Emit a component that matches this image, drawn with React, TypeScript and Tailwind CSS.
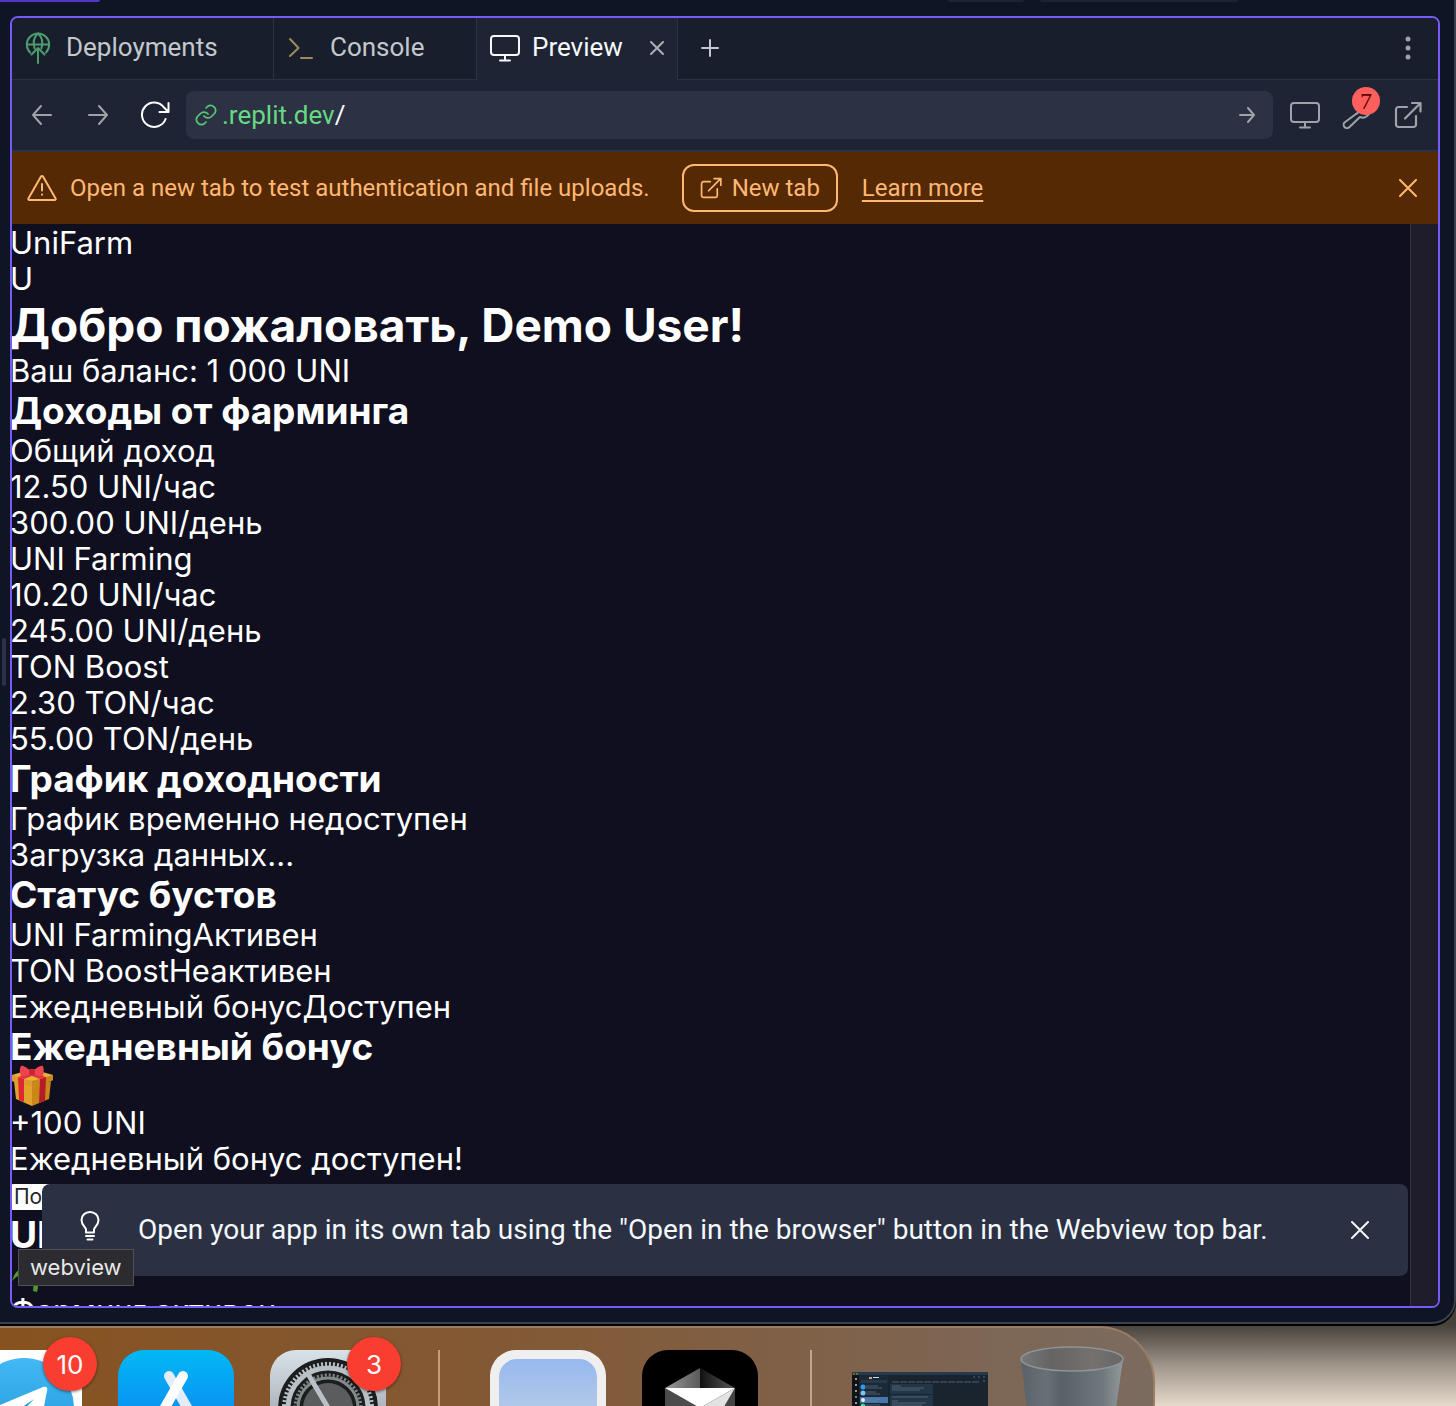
import type { ReactNode } from "react";

function Icon({ w, h, className = "", children }: { w: number; h: number; className?: string; children: ReactNode }) {
  return (
    <svg
      width={w}
      height={h}
      viewBox={`0 0 ${w} ${h}`}
      fill="none"
      stroke="currentColor"
      strokeWidth={2}
      strokeLinecap="round"
      strokeLinejoin="round"
      aria-hidden="true"
      className={`shrink-0 ${className}`}
    >
      {children}
    </svg>
  );
}

const DeployIcon = () => (
  <Icon w={26} h={32} className="text-[#4c9d6c]">
    <path d="M5 20.5a11.2 11.2 0 1 1 16 0" />
    <path d="M2 12.5h22M9.6 16.5C7.5 10 9 5 13 1.5 17 5 18.500 10 16.400 16.500" />
    <path d="M13 31V16M6.500 22.500 13 16l6.500 6.500" />
  </Icon>
);

const ConsoleIcon = () => (
  <Icon w={26} h={24} className="text-[#9c8a5c]">
    <path d="M2 3l8.500 9L2 20M13 22h11" />
  </Icon>
);

const MonitorIcon = () => (
  <Icon w={30} h={28}>
    <rect x="1" y="2" width="28" height="19" rx="3" />
    <path d="M15 21v5M10 26.500h10" />
  </Icon>
);

const CloseIcon = ({ size }: { size: number }) => (
  <Icon w={size} h={size}>
    <path d={`M1 1L${size - 1} ${size - 1}M${size - 1} 1L1 ${size - 1}`} />
  </Icon>
);

const ArrowIcon = ({ size, left = false }: { size: number; left?: boolean }) => (
  <Icon w={size} h={size} className={left ? "rotate-180" : ""}>
    <path d={`M1 ${size / 2}H${size - 1}M${size / 2 + 1} 1L${size - 1} ${size / 2}L${size / 2 + 1} ${size - 1}`} />
  </Icon>
);

const ReloadIcon = () => (
  <Icon w={30} h={28}>
    <path d="M25.600 18A12.200 12.200 0 1 1 24 6.500L28.500 11M28.500 2v9h-9" />
  </Icon>
);

const LinkIcon = () => (
  <Icon w={24} h={24} className="text-[#57c974]">
    <path d="M10 13a5 5 0 0 0 7.500.5l3-3a5 5 0 0 0-7-7L12 5" strokeWidth={1.700} />
    <path d="M14 11a5 5 0 0 0-7.500-.5l-3 3a5 5 0 0 0 7 7L12 19" strokeWidth={1.700} />
  </Icon>
);

const WarningIcon = () => (
  <Icon w={30} h={28}>
    <path d="M14 2.600 1.400 24.500a1 1 0 0 0 1 1.500h25.200a1 1 0 0 0 1-1.500L16 2.600a1.100 1.100 0 0 0-2 0Z" />
    <path d="M15 10v6.500M15 20.500v.2" />
  </Icon>
);

const ExternalIcon = ({ size }: { size: number }) => (
  <svg
    width={size}
    height={size}
    viewBox="0 0 28 28"
    fill="none"
    stroke="currentColor"
    strokeWidth={2.200}
    strokeLinecap="round"
    strokeLinejoin="round"
    aria-hidden="true"
    className="shrink-0"
  >
    <path d="M13 6H4.500A2.500 2.500 0 0 0 2 8.500v15A2.500 2.500 0 0 0 4.500 26h15a2.500 2.500 0 0 0 2.500-2.500V15M18 2h8.500v8.500M26 2.500 11 17.500" />
  </svg>
);

const WrenchIcon = () => (
  <Icon w={28} h={28}>
    <path d="M17 8.500a7 7 0 0 1 8-6l-4 4.500v3h3l3-3.500a7 7 0 0 1-9 9.500L7.500 26A3.200 3.200 0 0 1 2.500 21.500L14 13q3-1.500 3-4.500Z" />
  </Icon>
);

const BulbIcon = () => (
  <Icon w={20} h={30} className="text-white">
    <path d="M6 21.500v-3C5.500 16 1.500 14 1.500 9a8.500 8 0 0 1 17 0c0 5-4 7-4.500 9.500v3Z" />
    <path d="M6 25h8M7.500 28.500h5" />
  </Icon>
);

const GiftIcon = () => (
  <svg width="42" height="42" viewBox="0 0 42 42" role="img" aria-label="Подарок">
    <path d="M2 16 20 21V41L4 34Z" fill="#e3a32b" />
    <path d="M20 21 39 16 37 34 20 41Z" fill="#c98718" />
    <path d="M0 10 20 4 41 10 41 15 20 22 0 16Z" fill="#eab040" />
    <path d="M0 10 20 16 20 22 0 16Z" fill="#dc9d29" />
    <path d="M20 16 41 10V15L20 22Z" fill="#c8861c" />
    <path d="M6 12 12 14V37L7 35Z" fill="#dd2834" />
    <path d="M28 14 34 12 33 36 27 38Z" fill="#b51c27" />
    <path d="M6 12 24 6 30 7 12 14ZM28 14 12 8 17 6 34 12Z" fill="#e6323f" />
    <path d="M20 7C14 2 11 0 9 1c-2 3-1 8 0 10 3 1 7-1 11-3 4 2 9 4 11 3 1-3 1-7 0-10-2-1-6 1-11 6Z" fill="#ee4450" />
    <circle cx="20" cy="7" r="3" fill="#c9242f" />
  </svg>
);

const LeafIcon = () => (
  <svg width="42" height="36" viewBox="0 0 42 36" role="img" aria-label="Росток">
    <path d="M0 24C3 13 10 8 20 14c4-8 14-8 20-4-6 6-12 8-18 7 4 6 5 12 3 18l-4-1c1-7 0-12-2-17C10 15 5 19 0 24Z" fill="#4f9a26" />
  </svg>
);

function Line({ children }: { children: ReactNode }) {
  return <p className="text-[31px] leading-9">{children}</p>;
}

function Heading({ children }: { children: ReactNode }) {
  return <h2 className="text-[37px] leading-[44px] font-bold">{children}</h2>;
}

function TabBar() {
  return (
    <div role="tablist" className="flex h-[62px] shrink-0 bg-[#181e2c] text-[26px] text-[#c2c8cc]">
      <button role="tab" className="flex w-[262px] items-center gap-3 border-r border-b border-[#2b3245] px-[13px] pb-[2px]">
        <DeployIcon />
        <span className="pl-[3px]">Deployments</span>
      </button>
      <button role="tab" className="flex w-[203px] items-center gap-4 border-r border-b border-[#2b3245] px-[14px] pb-[2px]">
        <ConsoleIcon />
        Console
      </button>
      <div className="flex w-[201px] items-center border-r border-[#2b3245] bg-[#1e2433] px-[13px] pb-[3px]">
        <button role="tab" aria-selected="true" className="flex flex-1 items-center gap-3 text-[#f5f9fc]">
          <MonitorIcon />
          Preview
        </button>
        <button aria-label="Close tab" className="text-[#a9afb5]">
          <CloseIcon size={14} />
        </button>
      </div>
      <div className="flex flex-1 items-center justify-between border-b border-[#2b3245] pr-6 pb-px pl-[23px]">
        <button aria-label="New tab">
          <Icon w={18} h={18}>
            <path d="M9 1v16M1 9h16" />
          </Icon>
        </button>
        <button aria-label="More options" className="text-[#9da3a6]">
          <svg width="12" height="26" viewBox="0 0 12 26" fill="currentColor" aria-hidden="true">
            <circle cx="6" cy="4" r="2.500" />
            <circle cx="6" cy="13" r="2.500" />
            <circle cx="6" cy="22" r="2.500" />
          </svg>
        </button>
      </div>
    </div>
  );
}

function AddressBar() {
  return (
    <div className="flex h-[72px] shrink-0 items-center border-b-2 border-[#2d3344] bg-[#1e2433] pr-4 pl-5 text-[#9da3a6]">
      <button aria-label="Back">
        <ArrowIcon size={20} left />
      </button>
      <button aria-label="Forward" className="ml-9">
        <ArrowIcon size={20} />
      </button>
      <button aria-label="Reload" className="ml-8 text-white">
        <ReloadIcon />
      </button>
      <div className="ml-4 flex h-12 flex-1 items-center rounded-lg bg-[#2c3143] pr-[18px] pl-2 text-[26px]">
        <LinkIcon />
        <label htmlFor="path" className="pl-1 text-[#66d982]">
          .replit.dev
        </label>
        <input id="path" defaultValue="/" className="min-w-0 flex-1 bg-transparent text-white outline-none" />
        <button aria-label="Go">
          <ArrowIcon size={16} />
        </button>
      </div>
      <button aria-label="Device size" className="ml-[17px]">
        <MonitorIcon />
      </button>
      <button aria-label="Developer tools, 7 messages" className="relative ml-[22px]">
        <WrenchIcon />
        <span className="absolute -top-[14px] left-[10px] flex size-7 items-center justify-center rounded-full bg-[#ff605d] font-['Liberation_Serif',serif] text-2xl leading-none text-[#5c0000]">
          7
        </span>
      </button>
      <button aria-label="Open in the browser" className="ml-6">
        <ExternalIcon size={28} />
      </button>
    </div>
  );
}

function Banner() {
  return (
    <div className="flex h-[72px] shrink-0 items-center bg-[#542903] pr-[21px] pl-[15px] text-2xl text-[#ffb873]">
      <WarningIcon />
      <p className="pl-[13px]">Open a new tab to test authentication and file uploads.</p>
      <button className="ml-8 flex h-12 items-center gap-[10px] rounded-xl border-2 border-[#ffb873] px-4">
        <ExternalIcon size={22} />
        New tab
      </button>
      <a href="#learn" className="ml-6 underline decoration-2 underline-offset-4">
        Learn more
      </a>
      <button aria-label="Dismiss" className="ml-auto">
        <CloseIcon size={18} />
      </button>
    </div>
  );
}

function Webview() {
  return (
    <div className="flex min-h-0 flex-1 overflow-hidden bg-[#0f0f20] font-['Inter',sans-serif] text-white">
      <main className="-ml-0.5 min-w-0 flex-1 pt-px">
        <Line>UniFarm</Line>
        <Line>U</Line>
        <h1 className="text-[46px] leading-[56px] font-bold">Добро пожаловать, Demo User!</h1>
        <Line>Ваш баланс: 1 000 UNI</Line>
        <Heading>Доходы от фарминга</Heading>
        <Line>Общий доход</Line>
        <Line>12.50 UNI/час</Line>
        <Line>300.00 UNI/день</Line>
        <Line>UNI Farming</Line>
        <Line>10.20 UNI/час</Line>
        <Line>245.00 UNI/день</Line>
        <Line>TON Boost</Line>
        <Line>2.30 TON/час</Line>
        <Line>55.00 TON/день</Line>
        <Heading>График доходности</Heading>
        <Line>График временно недоступен</Line>
        <Line>Загрузка данных...</Line>
        <Heading>Статус бустов</Heading>
        <Line>UNI FarmingАктивен</Line>
        <Line>TON BoostНеактивен</Line>
        <Line>Ежедневный бонусДоступен</Line>
        <Heading>Ежедневный бонус</Heading>
        <div className="-mt-1 h-10 pl-0.5">
          <GiftIcon />
        </div>
        <Line>+100 UNI</Line>
        <Line>Ежедневный бонус доступен!</Line>
        <button className="my-[7px] block h-[26px] rounded bg-white px-1 text-[21px] leading-[26px] text-[#262626]">
          Получить
        </button>
        <div className="-mt-1">
          <Heading>UNI Farming</Heading>
        </div>
        <div className="h-9 pl-0.5">
          <LeafIcon />
        </div>
        <Line>Фарминг активен</Line>
      </main>
      <div className="w-7 border-l border-[#34333f] bg-[#1f1d2b]" />
    </div>
  );
}

function PreviewPane() {
  return (
    <section className="relative mr-[14px] ml-[10px] flex min-h-0 flex-1 flex-col overflow-hidden rounded-lg border-2 border-[#775bf5]">
      <TabBar />
      <AddressBar />
      <Banner />
      <Webview />
      <div
        role="status"
        className="absolute right-[30px] bottom-[30px] left-[30px] flex h-[92px] items-center rounded-lg bg-[#2b3143] pr-[39px] pl-[38px] text-[28px] text-[#f5f9fc]"
      >
        <div className="pb-2">
          <BulbIcon />
        </div>
        <p className="pl-[38px]">
          Open your app in its own tab using the "Open in the browser" button in the Webview top bar.
        </p>
        <button aria-label="Close" className="ml-auto">
          <CloseIcon size={18} />
        </button>
      </div>
      <div
        role="tooltip"
        className="absolute bottom-5 left-[6px] flex h-[37px] items-center border border-[#505055] bg-[#2c2c30] px-[11px] font-['Inter',sans-serif] text-[22px] text-[#e8e8e8]"
      >
        webview
      </div>
    </section>
  );
}

function Badge({ children }: { children: ReactNode }) {
  return (
    <span className="absolute -top-[13px] -right-[15px] flex size-[54px] items-center justify-center rounded-full bg-[#f93e31] font-['Inter',sans-serif] text-[26px] text-white shadow-[0_1px_3px_rgba(0,0,0,0.5)]">
      {children}
    </span>
  );
}

const TelegramIcon = () => (
  <svg width="116" height="116" viewBox="0 0 116 116" aria-hidden="true">
    <defs>
      <linearGradient id="tg" x1="0" y1="0" x2="0" y2="1">
        <stop offset="0" stopColor="#42b8f5" />
        <stop offset="1" stopColor="#1c93d5" />
      </linearGradient>
    </defs>
    <rect width="116" height="116" rx="26" fill="#fff" />
    <circle cx="58" cy="58" r="50" fill="url(#tg)" />
    <path d="M22 60 77 37c3-1 5 0 4 4L73 82c-1 4-4 4-7 2L40 62Z" fill="#fff" />
    <path d="M46 64 68 49 52 66v12Z" fill="#2c9bd0" />
  </svg>
);

const AppStoreIcon = () => (
  <svg width="116" height="116" viewBox="0 0 116 116" aria-hidden="true">
    <defs>
      <linearGradient id="as" x1="0" y1="0" x2="0" y2="1">
        <stop offset="0" stopColor="#02b8f5" />
        <stop offset="1" stopColor="#1070f0" />
      </linearGradient>
    </defs>
    <rect width="116" height="116" rx="26" fill="url(#as)" />
    <g stroke="#fff" strokeWidth="10" strokeLinecap="round">
      <path d="M51 26 82 80" stroke="#e4edf7" />
      <path d="M65 26 34 80M20 68h76" />
    </g>
  </svg>
);

const SettingsIcon = () => (
  <svg width="116" height="116" viewBox="0 0 116 116" fill="none" aria-hidden="true">
    <defs>
      <linearGradient id="st" x1="0" y1="0" x2="0" y2="1">
        <stop offset="0" stopColor="#d8e3e9" />
        <stop offset="1" stopColor="#84898e" />
      </linearGradient>
    </defs>
    <rect width="116" height="116" rx="26" fill="url(#st)" />
    <circle cx="58" cy="58" r="50" fill="#1b1d1e" />
    <circle cx="58" cy="58" r="40" stroke="#b9c1c6" strokeWidth="5" />
    <circle cx="58" cy="58" r="44" stroke="#b9c1c6" strokeWidth="4" strokeDasharray="2 2" />
    <circle cx="58" cy="58" r="30" stroke="#84898c" strokeWidth="3" />
    <circle cx="58" cy="58" r="33" stroke="#84898c" strokeWidth="3" strokeDasharray="2 2" />
    <circle cx="58" cy="58" r="25" fill="#5b5c5d" />
    <path d="M38 24 60 61H98M60 61 39 92" stroke="#b9c1c6" strokeWidth="5" />
  </svg>
);

const WindowIcon = () => (
  <svg width="116" height="116" viewBox="0 0 116 116" aria-hidden="true">
    <defs>
      <linearGradient id="wn" x1="0" y1="0" x2="0" y2="1">
        <stop offset="0" stopColor="#96b9ef" />
        <stop offset="0.500" stopColor="#b2c8e8" />
        <stop offset="1" stopColor="#c6d2e0" />
      </linearGradient>
    </defs>
    <rect width="116" height="116" rx="26" fill="#efefef" />
    <rect x="9" y="9" width="98" height="98" rx="18" fill="url(#wn)" />
  </svg>
);

const CubeIcon = () => (
  <svg width="116" height="116" viewBox="0 0 116 116" aria-hidden="true">
    <defs>
      <linearGradient id="cl" x1="0" y1="0" x2="1" y2="0">
        <stop offset="0" stopColor="#999" />
        <stop offset="1" stopColor="#5a5a5a" />
      </linearGradient>
      <linearGradient id="cr" x1="0" y1="0" x2="1" y2="0">
        <stop offset="0" stopColor="#111" />
        <stop offset="1" stopColor="#5a5a5a" />
      </linearGradient>
    </defs>
    <rect width="116" height="116" rx="26" fill="#000" />
    <path d="M58 18 23 38H58Z" fill="url(#cl)" />
    <path d="M58 18 93 38H58Z" fill="url(#cr)" />
    <path d="M23 38V78L58 98V58Z" fill="#4c4c4c" />
    <path d="M93 38V78L58 98Z" fill="#444" />
    <path d="M93 38 58 98V58Z" fill="#e2e2e2" />
    <path d="M23 38H93L58 58Z" fill="#fff" />
  </svg>
);

const MiniWindow = () => (
  <svg width="136" height="90" viewBox="0 0 136 90" aria-hidden="true">
    <rect width="136" height="90" rx="1" fill="#19242f" />
    <rect width="136" height="3" fill="#26394b" />
    <rect y="3" width="7" height="87" fill="#101214" />
    <rect x="7" y="3" width="29" height="87" fill="#1b2937" />
    <circle cx="2" cy="2" r="1" fill="#d44" />
    <circle cx="5" cy="2" r="1" fill="#3a5" />
    <rect x="9" y="8" width="26" height="3" fill="#26394b" />
    <rect x="17" y="5" width="3" height="2" fill="#d99" />
    <rect x="21" y="5" width="6" height="1" fill="#cdd" />
    <rect x="8" y="25" width="28" height="6" fill="#4377ab" />
    <circle cx="11" cy="15" r="2.500" fill="#2f9df0" />
    <circle cx="11" cy="21" r="2.500" fill="#7cc6f2" />
    <circle cx="11" cy="28" r="2" fill="#eee" />
    <circle cx="11" cy="34" r="2.500" fill="#3cd6a6" />
    <g opacity="0.6">
      <path d="M14 14h12M14 16h16M14 20h10M14 22h14M14 27h14M14 29h12M14 33h14" stroke="#748696" strokeWidth="1" />
    </g>
    <path d="M3 7h2M3 13h2M3 19h2M3 31h2" stroke="#99a" strokeWidth="2" />
    <path d="M3 25h2" stroke="#39c" strokeWidth="2" />
    <rect x="38" y="12" width="43" height="10" fill="#22364a" />
    <rect x="38" y="23" width="43" height="14" fill="#22364a" />
    <g opacity="0.6">
      <path d="M40 10h88" stroke="#6f8798" strokeDasharray="7 1" />
      <path d="M40 14h9M40 16h32M40 18h28M40 25h36M40 29h6M40 31h34M40 33h30" stroke="#71808e" />
    </g>
    <path d="M121 5h2M126 5h2M131 5h2M131 9h2" stroke="#39739d" />
  </svg>
);

const TrashIcon = () => (
  <svg width="104" height="90" viewBox="0 0 104 90" aria-hidden="true">
    <defs>
      <linearGradient id="tr" x1="0" y1="0" x2="1" y2="0">
        <stop offset="0" stopColor="#596268" />
        <stop offset="0.250" stopColor="#687176" />
        <stop offset="0.400" stopColor="#586167" />
        <stop offset="0.800" stopColor="#6f787c" />
        <stop offset="1" stopColor="#91999d" />
      </linearGradient>
      <linearGradient id="ti" x1="0" y1="0" x2="1" y2="0">
        <stop offset="0" stopColor="#77787a" />
        <stop offset="0.300" stopColor="#656463" />
        <stop offset="0.700" stopColor="#74716e" />
        <stop offset="1" stopColor="#686766" />
      </linearGradient>
    </defs>
    <path d="M1 13 10 90H92L103 13Z" fill="url(#tr)" />
    <ellipse cx="52" cy="13" rx="51" ry="12" fill="url(#ti)" stroke="#8e9497" strokeWidth="1.500" />
  </svg>
);

function Dock() {
  return (
    <footer className="-mt-5 flex h-[102px] shrink-0 items-stretch overflow-hidden bg-linear-to-b from-[#46413b] from-20% via-[#a0958a] via-60% to-[#e6dacc] pt-[22px]">
      <div className="flex w-[1155px] items-start rounded-tr-[56px] border-t-2 border-r-2 border-[#9b7d64] bg-linear-to-r from-[#87521f] via-[#825a38] to-[#7b6b5f] pt-[22px]">
        <div className="relative -ml-[34px] shrink-0">
          <TelegramIcon />
          <Badge>10</Badge>
        </div>
        <div className="ml-9 shrink-0">
          <AppStoreIcon />
        </div>
        <div className="relative ml-9 shrink-0">
          <SettingsIcon />
          <Badge>3</Badge>
        </div>
        <div className="ml-[52px] h-20 w-[2px] shrink-0 bg-[#c69c75]" />
        <div className="ml-[50px] shrink-0">
          <WindowIcon />
        </div>
        <div className="ml-9 shrink-0">
          <CubeIcon />
        </div>
        <div className="ml-[52px] h-20 w-[2px] shrink-0 bg-[#c3a58d]" />
        <div className="ml-10 shrink-0 pt-[22px]">
          <MiniWindow />
        </div>
        <div className="-mt-1 ml-8 shrink-0">
          <TrashIcon />
        </div>
      </div>
    </footer>
  );
}

export default function App() {
  return (
    <div className="flex h-screen flex-col overflow-hidden bg-[#403c37] font-['Roboto',sans-serif]">
      <div className="relative z-10 flex min-h-0 flex-1 flex-col rounded-br-[24px] border-r-2 border-b-2 border-[#3a414c] bg-[#0e1524] pb-[14px] shadow-[0_2px_0_#000]">
        <header className="flex h-4 shrink-0 items-start">
          <div className="h-[2px] w-[100px] rounded-br bg-[#5236c9]" />
          <div className="ml-auto h-[2px] w-[76px] rounded-b bg-[#1c2333]" />
          <div className="mr-[216px] ml-4 h-[2px] w-[198px] rounded-b bg-[#1c2333]" />
        </header>
        <PreviewPane />
        <div className="absolute top-[638px] left-[2px] h-12 w-1 rounded-full bg-[#2b3245]" />
      </div>
      <Dock />
    </div>
  );
}
